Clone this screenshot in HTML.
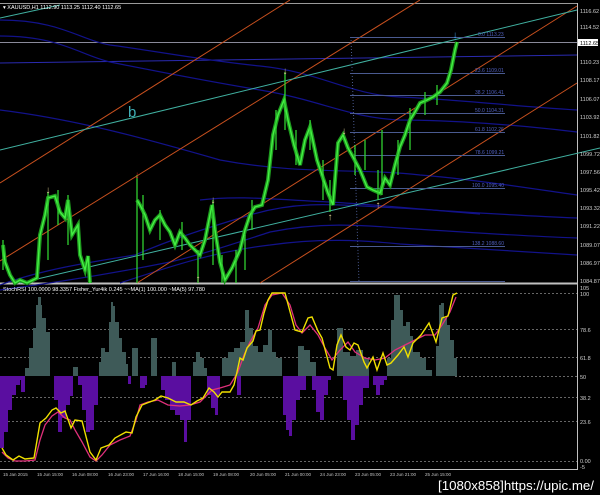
<!DOCTYPE html>
<html><head><meta charset="utf-8"><style>
html,body{margin:0;padding:0;background:#000;width:600px;height:495px;overflow:hidden}
svg{display:block}
text{font-family:"Liberation Sans",sans-serif}
</style></head><body>
<svg width="600" height="495" viewBox="0 0 600 495" xmlns="http://www.w3.org/2000/svg">
<rect width="600" height="495" fill="#000"/>
<line x1="0" y1="3.5" x2="577" y2="3.5" stroke="#9a9a9a"/>
<line x1="577.5" y1="3" x2="577.5" y2="470" stroke="#c0c0c0"/>
<line x1="0" y1="283.5" x2="577" y2="283.5" stroke="#c0c0c0" stroke-width="2"/>
<line x1="0" y1="469.5" x2="577" y2="469.5" stroke="#c0c0c0"/>
<line x1="0" y1="42.5" x2="577" y2="42.5" stroke="#8a8a9a"/>
<line x1="0" y1="63" x2="577" y2="55" stroke="#2a2ab0"/>
<g fill="none" stroke="#12128a" stroke-width="1.2">
<path d="M0,20 C60,20 80,40 110,45 C150,50 200,60 260,66 C320,72 350,95 400,97 C450,99 500,105 577,110"/>
<path d="M0,36 C60,36 80,55 110,62 C150,70 200,80 260,90 C320,100 350,118 400,120 C450,120 520,125 577,132"/>
<path d="M0,110 C80,120 150,140 220,160 C300,175 360,168 420,175 C480,180 540,190 577,195"/>
<path d="M0,285 C40,270 90,262 135,255 C170,240 200,230 250,215 C300,200 340,205 380,207 C440,210 500,215 577,218"/>
<path d="M0,290 C60,282 120,272 170,262 C200,255 230,245 270,232 C320,222 360,225 400,228 C460,232 520,236 577,238"/>
<path d="M120,283 C160,270 210,252 270,245 C320,238 360,240 400,244 C460,248 520,252 577,255"/>
<path d="M200,200 C240,195 280,200 330,202 C380,205 430,210 480,214"/>
</g>
<g stroke="#c8501e" stroke-width="1">
<line x1="0" y1="183" x2="290" y2="0"/>
<line x1="0" y1="261" x2="420" y2="0"/>
<line x1="137" y1="283" x2="577" y2="6"/>
<line x1="260" y1="283" x2="577" y2="83"/>
</g>
<g stroke="#40b0a0" stroke-width="1">
<line x1="0" y1="150" x2="577" y2="10"/>
<line x1="0" y1="18" x2="60" y2="5"/>
<line x1="20" y1="283" x2="600" y2="148"/>
</g>
<text x="128" y="117" fill="#40b0b8" font-size="15">b</text>
<g stroke="#4a5a90" stroke-width="1">
<line x1="350" y1="37.5" x2="505" y2="37.5"/>
<line x1="350" y1="73.5" x2="505" y2="73.5"/>
<line x1="350" y1="95.5" x2="505" y2="95.5"/>
<line x1="350" y1="113.5" x2="505" y2="113.5"/>
<line x1="350" y1="132.5" x2="505" y2="132.5"/>
<line x1="350" y1="155.5" x2="505" y2="155.5"/>
<line x1="350" y1="188.5" x2="505" y2="188.5"/>
<line x1="350" y1="246.5" x2="505" y2="246.5"/>
<line x1="350" y1="281.5" x2="505" y2="281.5"/>
<line x1="351" y1="37" x2="359" y2="283" stroke-dasharray="1,2"/>
</g>
<g fill="#5060c0" font-size="5">
<text x="478" y="36">0.0 1113.23</text><text x="475" y="72">23.6 1109.01</text>
<text x="475" y="94">38.2 1106.41</text><text x="475" y="112">50.0 1104.31</text>
<text x="475" y="131">61.8 1102.26</text><text x="475" y="154">78.6 1099.21</text>
<text x="472" y="187">100.0 1095.40</text><text x="472" y="245">138.2 1088.60</text>
</g>
<g fill="none" stroke-linejoin="miter">
<polyline stroke="#1e9a1e" stroke-width="4" points="3,245 5,262 10,275 15,283 20,280 27,283 37,278 40,235 45,215 48,198 55,196 60,212 65,218 68,200 72,235 78,225 80,255 85,270 88,256 90,283"/>
<polyline stroke="#1e9a1e" stroke-width="4" points="137,200 140,205 145,215 150,230 155,220 160,215 165,225 170,232 175,245 180,232 185,238 190,245 195,250 200,255 205,240 212,205 215,230 220,262 225,280 232,268 240,250 245,230 250,215 255,207 262,205 268,180 273,135 278,115 284,100 288,120 294,145 300,165 305,140 310,127 317,160 322,175 328,193 333,205 338,143 343,135 348,148 353,157 360,170 367,187 373,190 380,193 385,178 390,185 395,165 400,147 405,135 410,120 415,112 420,103 427,100 433,97 440,92 447,83 451,70 455,50 457,42"/>
<polyline stroke="#44f044" stroke-width="1.4" points="3,245 5,262 10,275 15,283 20,280 27,283 37,278 40,235 45,215 48,198 55,196 60,212 65,218 68,200 72,235 78,225 80,255 85,270 88,256 90,283"/>
<polyline stroke="#44f044" stroke-width="1.4" points="137,200 140,205 145,215 150,230 155,220 160,215 165,225 170,232 175,245 180,232 185,238 190,245 195,250 200,255 205,240 212,205 215,230 220,262 225,280 232,268 240,250 245,230 250,215 255,207 262,205 268,180 273,135 278,115 284,100 288,120 294,145 300,165 305,140 310,127 317,160 322,175 328,193 333,205 338,143 343,135 348,148 353,157 360,170 367,187 373,190 380,193 385,178 390,185 395,165 400,147 405,135 410,120 415,112 420,103 427,100 433,97 440,92 447,83 451,70 455,50 457,42"/>
</g>
<g stroke="#30d030" stroke-width="1.3">
<line x1="137" y1="175" x2="137" y2="283"/><line x1="213" y1="200" x2="213" y2="265"/>
<line x1="285" y1="72" x2="285" y2="130"/><line x1="48" y1="192" x2="48" y2="260"/>
<line x1="3" y1="240" x2="3" y2="270"/><line x1="198" y1="250" x2="198" y2="283"/>
<line x1="330" y1="180" x2="330" y2="212"/><line x1="378" y1="170" x2="378" y2="200"/>
<line x1="382" y1="130" x2="382" y2="195"/><line x1="365" y1="140" x2="365" y2="170"/>
<line x1="143" y1="195" x2="143" y2="260"/><line x1="160" y1="210" x2="160" y2="240"/>
<line x1="222" y1="255" x2="222" y2="283"/><line x1="236" y1="250" x2="236" y2="283"/>
<line x1="245" y1="235" x2="245" y2="270"/><line x1="68" y1="195" x2="68" y2="245"/>
<line x1="310" y1="120" x2="310" y2="150"/><line x1="410" y1="108" x2="410" y2="150"/>
<line x1="276" y1="110" x2="276" y2="150"/><line x1="296" y1="130" x2="296" y2="165"/>
<line x1="323" y1="160" x2="323" y2="200"/><line x1="355" y1="145" x2="355" y2="175"/>
<line x1="398" y1="140" x2="398" y2="175"/><line x1="425" y1="92" x2="425" y2="115"/>
<line x1="437" y1="85" x2="437" y2="105"/><line x1="58" y1="190" x2="58" y2="225"/>
<line x1="182" y1="222" x2="182" y2="250"/><line x1="252" y1="200" x2="252" y2="230"/>
</g>
<g font-size="10" text-anchor="middle" font-weight="bold">
<text x="285" y="74" fill="#d8c890">↓</text><text x="48" y="193" fill="#d8c890">↓</text>
<text x="213" y="203" fill="#d8c890">↓</text><text x="344" y="134" fill="#d8c890">↓</text>
<text x="137" y="178" fill="#e02020">↓</text><text x="455" y="38" fill="#40a0f0">↓</text>
<text x="198" y="282" fill="#d8c890">↑</text><text x="330" y="220" fill="#d8c890">↑</text>
<text x="378" y="208" fill="#d8c890">↑</text>
</g>
<text x="3" y="9" fill="#fff" font-size="5.5">▾ XAUUSD,H1  1112.90 1113.25 1112.40 1112.65</text>
<g fill="#d0d0d0" font-size="5.5">
<text x="580" y="13">1116.62</text><text x="580" y="29">1114.52</text>
<text x="580" y="64">1110.23</text><text x="580" y="82">1108.17</text>
<text x="580" y="101">1106.07</text><text x="580" y="119">1103.92</text>
<text x="580" y="138">1101.82</text><text x="580" y="156">1099.72</text>
<text x="580" y="174">1097.56</text><text x="580" y="192">1095.42</text>
<text x="580" y="210">1093.32</text><text x="580" y="228">1091.22</text>
<text x="580" y="247">1089.07</text><text x="580" y="265">1086.97</text>
<text x="580" y="283">1084.87</text>
</g>
<rect x="578" y="39" width="20" height="7" fill="#fff"/>
<text x="580" y="45" fill="#000" font-size="5.5">1112.65</text>
<text x="3" y="291" fill="#fff" font-size="5.5">StochRSI 100.0000 98.3357  Fisher_Yur4ik 0.245  ~~MA(1) 100.000  ~MA(5) 97.780</text>
<g stroke="#888" stroke-dasharray="2,2" stroke-width="0.8">
<line x1="0" y1="293.5" x2="577" y2="293.5"/><line x1="0" y1="329.5" x2="577" y2="329.5"/>
<line x1="0" y1="357.5" x2="577" y2="357.5"/><line x1="0" y1="397.5" x2="577" y2="397.5"/>
<line x1="0" y1="421.5" x2="577" y2="421.5"/><line x1="0" y1="461.5" x2="577" y2="461.5"/>
<line x1="455" y1="376.5" x2="577" y2="376.5"/>
</g>
<g fill="#d0d0d0" font-size="5.5">
<text x="580" y="290">105</text><text x="580" y="296">100</text><text x="580" y="332">78.6</text>
<text x="580" y="360">61.8</text><text x="580" y="379">50</text><text x="580" y="400">38.2</text>
<text x="580" y="424">23.6</text><text x="580" y="463">0.00</text><text x="580" y="469">-5</text>
</g>
<polygon fill="#3e5a58" points="25,376 25,368 29,368 29,348 33,348 33,328 36,328 36,305 38,305 38,297 41,297 41,305 42,305 42,318 46,318 46,332 50,332 50,376 73,376 73,367 78,367 78,376 99,376 99,362 101,362 101,348 105,348 105,352 109,352 109,322 111,322 111,302 113,302 113,306 115,306 115,322 119,322 119,338 122,338 122,352 126,352 126,364 128,364 128,376 132,376 132,348 138,348 138,376 151,376 151,338 157,338 157,376 172,376 172,362 176,362 176,376 193,376 193,362 196,362 196,352 200,352 200,358 204,358 204,368 207,368 207,376 222,376 222,358 228,358 228,352 234,352 234,348 240,348 240,342 245,342 245,310 249,310 249,328 253,328 253,346 258,346 258,352 263,352 263,345 268,345 268,330 272,330 272,352 276,352 276,358 282,358 282,376 298,376 298,346 304,346 304,350 310,350 310,362 316,362 316,376 337,376 337,328 343,328 343,352 350,352 350,356 356,356 356,350 363,350 363,358 369,358 369,376 387,376 387,358 391,358 391,320 394,320 394,295 400,295 400,310 403,310 403,326 406,326 406,322 410,322 410,336 413,336 413,352 420,352 420,358 426,358 426,370 432,370 432,376 436,376 436,346 439,346 439,305 441,305 441,303 444,303 444,318 447,318 447,325 450,325 450,340 454,340 454,358 457,358 457,376"/>
<polygon fill="#5a0ea0" points="0,376 0,448 4,448 4,432 8,432 8,410 12,410 12,395 16,395 16,385 20,385 20,380 21,380 21,392 25,392 25,376 54,376 54,400 58,400 58,432 62,432 62,418 66,418 66,405 70,405 70,396 73,396 73,376 78,376 78,385 82,385 82,410 86,410 86,432 90,432 90,430 94,430 94,405 98,405 98,376 128,376 128,384 131,384 131,376 140,376 140,388 145,388 145,385 147,385 147,376 161,376 161,390 165,390 165,400 170,400 170,410 175,410 175,415 180,415 180,420 184,420 184,442 187,442 187,420 191,420 191,376 207,376 207,395 211,395 211,408 215,408 215,415 218,415 218,395 220,395 220,376 237,376 237,395 241,395 241,376 283,376 283,415 286,415 286,430 289,430 289,436 292,436 292,420 296,420 296,400 300,400 300,390 306,390 306,376 312,376 312,390 316,390 316,412 320,412 320,420 324,420 324,395 328,395 328,380 331,380 331,376 343,376 343,400 347,400 347,420 351,420 351,440 355,440 355,425 359,425 359,405 363,405 363,388 369,388 369,376 373,376 373,385 376,385 376,395 380,395 380,385 384,385 384,380 387,380 387,376"/>
<polyline fill="none" stroke="#e0307a" stroke-width="1.3" points="2,452 8,458 15,461 25,461 35,460 40,440 45,425 52,416 58,412 65,418 70,420 75,430 82,442 90,457 96,461 102,455 110,445 120,440 130,436 136,420 140,405 148,402 158,400 168,405 180,406 190,405 200,402 206,396 212,390 220,388 230,385 238,372 244,355 250,342 258,328 265,305 272,295 282,293 290,305 296,325 302,333 310,325 318,335 325,348 332,360 340,350 348,342 355,352 365,358 375,360 385,358 395,350 405,345 415,340 425,335 435,335 442,325 450,312 456,297"/>
<polyline fill="none" stroke="#f0e000" stroke-width="1.4" points="2,448 6,455 13,460 19,456 25,459 34,458 40,423 46,418 52,410 56,408 61,413 65,411 71,428 75,420 82,421 90,452 96,460 101,448 109,445 115,438 126,432 132,433 136,417 142,405 147,403 155,400 161,396 168,398 176,402 184,402 191,405 197,401 203,398 209,388 214,392 218,397 222,392 230,392 234,385 237,372 240,358 243,360 247,348 253,341 256,331 260,330 264,313 268,300 272,293 285,293 295,330 302,332 308,318 312,317 318,331 322,338 330,368 333,370 337,345 341,335 346,347 350,350 354,343 358,345 364,362 367,368 373,357 377,370 383,353 387,365 391,363 398,355 404,347 408,357 413,343 421,335 429,323 436,342 442,318 448,316 453,295 457,293"/>
<g fill="#c0c0c0" font-size="4.5">
<text x="3" y="476">15 Jan 2015</text><text x="37" y="476">15 Jun 15:00</text><text x="72" y="476">16 Jun 08:00</text>
<text x="108" y="476">16 Jun 23:00</text><text x="143" y="476">17 Jun 16:00</text><text x="178" y="476">18 Jun 15:00</text>
<text x="213" y="476">19 Jun 08:00</text><text x="250" y="476">20 Jun 05:00</text><text x="285" y="476">21 Jun 00:00</text>
<text x="320" y="476">24 Jun 23:00</text><text x="355" y="476">23 Jun 05:00</text><text x="390" y="476">23 Jun 21:00</text><text x="425" y="476">25 Jun 15:00</text>
</g>
<text x="438" y="490" fill="#fff" font-size="13" font-family="DejaVu Sans Mono, monospace" textLength="156" lengthAdjust="spacingAndGlyphs">[1080x858]https://upic.me/</text>
</svg>
</body></html>
